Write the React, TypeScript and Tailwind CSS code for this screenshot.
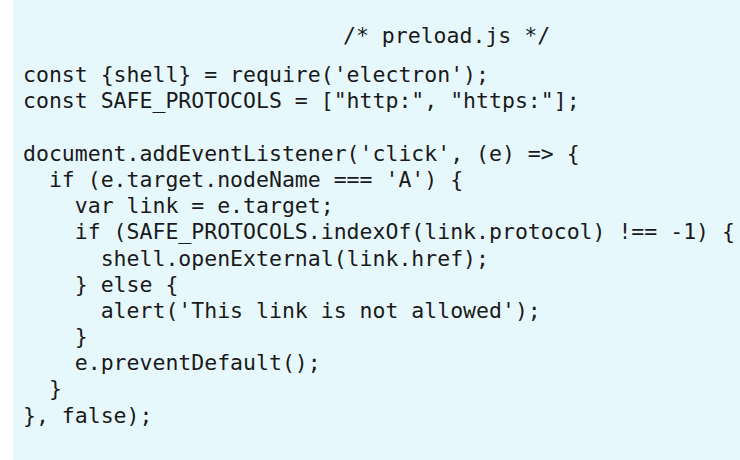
import React from "react";

const lines = [
  "const {shell} = require('electron');",
  'const SAFE_PROTOCOLS = ["http:", "https:"];',
  "",
  "document.addEventListener('click', (e) => {",
  "  if (e.target.nodeName === 'A') {",
  "    var link = e.target;",
  "    if (SAFE_PROTOCOLS.indexOf(link.protocol) !== -1) {",
  "      shell.openExternal(link.href);",
  "    } else {",
  "      alert('This link is not allowed');",
  "    }",
  "    e.preventDefault();",
  "  }",
  "}, false);",
];

export default function App() {
  return (
    <div className="flex h-[460px] w-[740px] overflow-hidden bg-white">
      <div
        className="ml-[13px] flex-1 bg-[#e7f8fd] pl-[10px] pt-[23px] text-[21.5px] leading-[26.2px] text-[#1a1a1a]"
        style={{ fontFamily: '"DejaVu Sans Mono", "Liberation Mono", monospace' }}
      >
        <div className="whitespace-pre pl-[320px]">/* preload.js */</div>
        <div className="mt-[13px] whitespace-pre">
          {lines.map((l, i) => (
            <div key={i} className="h-[26.2px]">
              {l}
            </div>
          ))}
        </div>
      </div>
    </div>
  );
}
